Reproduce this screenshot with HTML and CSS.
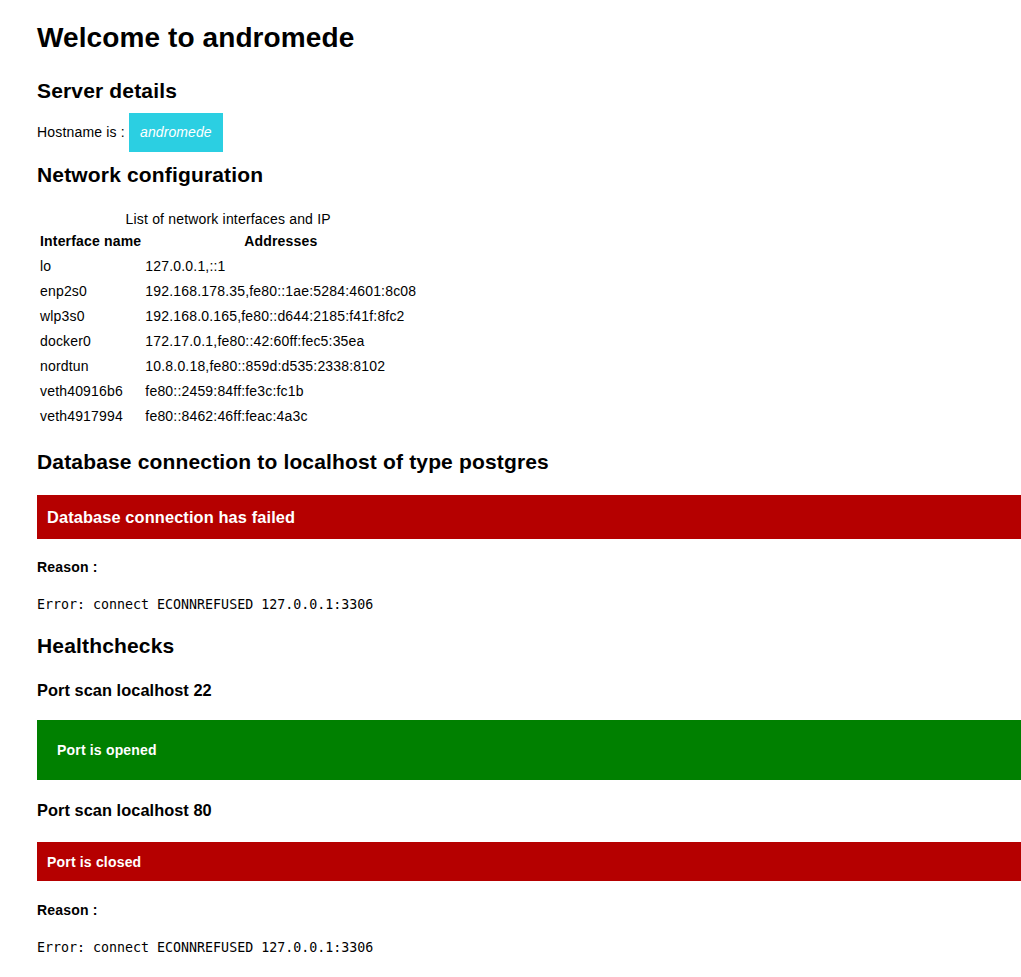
FILE: index.html
```html
<!DOCTYPE html>
<html lang="en">
<head>
<meta charset="utf-8">
<title>Welcome to andromede</title>
<link rel="stylesheet" href="styles.css">
</head>
<body>
<main class="page">
  <h1 class="title">Welcome to andromede</h1>

  <h2 class="section-title first">Server details</h2>
  <p class="hostname">Hostname is : <span class="host-badge">andromede</span></p>

  <h2 class="section-title">Network configuration</h2>
  <table class="net-table">
    <caption>List of network interfaces and IP</caption>
    <thead>
      <tr><th class="col-name">Interface name</th><th>Addresses</th></tr>
    </thead>
    <tbody>
      <tr><td>lo</td><td>127.0.0.1,::1</td></tr>
      <tr><td>enp2s0</td><td>192.168.178.35,fe80::1ae:5284:4601:8c08</td></tr>
      <tr><td>wlp3s0</td><td>192.168.0.165,fe80::d644:2185:f41f:8fc2</td></tr>
      <tr><td>docker0</td><td>172.17.0.1,fe80::42:60ff:fec5:35ea</td></tr>
      <tr><td>nordtun</td><td>10.8.0.18,fe80::859d:d535:2338:8102</td></tr>
      <tr><td>veth40916b6</td><td>fe80::2459:84ff:fe3c:fc1b</td></tr>
      <tr><td>veth4917994</td><td>fe80::8462:46ff:feac:4a3c</td></tr>
    </tbody>
  </table>

  <h2 class="section-title db-title">Database connection to localhost of type postgres</h2>
  <div class="alert alert-db"><h3 class="alert-heading">Database connection has failed</h3></div>
  <h4 class="reason">Reason :</h4>
  <pre class="error">Error: connect ECONNREFUSED 127.0.0.1:3306</pre>

  <h2 class="section-title health-title">Healthchecks</h2>
  <h3 class="check-title">Port scan localhost 22</h3>
  <div class="alert alert-ok">Port is opened</div>
  <h3 class="check-title">Port scan localhost 80</h3>
  <div class="alert alert-closed">Port is closed</div>
  <h4 class="reason">Reason :</h4>
  <pre class="error">Error: connect ECONNREFUSED 127.0.0.1:3306</pre>
</main>
</body>
</html>
```

FILE: styles.css
```css
html, body {
  margin: 0;
  padding: 0;
  background: #ffffff;
  overflow-x: hidden;
}

body {
  font-family: "Liberation Sans", Arial, sans-serif;
  font-size: 14px;
  line-height: 16px;
  letter-spacing: 0.18px;
  color: #000000;
}

.page {
  padding: 22px 0 20px 37px;
}

.title {
  margin: 0;
  font-size: 28px;
  line-height: 32px;
  font-weight: bold;
  letter-spacing: 0.1px;
}

.section-title {
  margin: 0;
  font-size: 21px;
  line-height: 24px;
  font-weight: bold;
  letter-spacing: 0.16px;
}

.section-title.first {
  margin-top: 25px;
}

.hostname {
  margin: 10px 0 11px;
  line-height: 16px;
}

.host-badge {
  display: inline-block;
  background: #2bcfe2;
  color: #ffffff;
  font-style: italic;
  padding: 11px 11px 12px;
  line-height: 16px;
  letter-spacing: 0.1px;
}

.net-table {
  margin-top: 24px;
  border-spacing: 2px;
}

.net-table caption {
  line-height: 16px;
  padding-bottom: 1px;
}

.net-table th,
.net-table td {
  padding: 3px 1px;
  line-height: 17px;
  text-align: left;
  white-space: nowrap;
}

.net-table th {
  font-weight: bold;
  text-align: center;
}

.net-table th.col-name {
  width: 101px;
  text-align: left;
}

.db-title {
  margin-top: 20px;
}

.alert {
  color: #ffffff;
  font-weight: bold;
}

.alert-heading {
  margin: 0;
  font-size: 16.38px;
  line-height: 19px;
  letter-spacing: 0.12px;
}

.alert-db {
  background: #b50000;
  margin-top: 21px;
  padding: 13px 10px 12px;
}

.alert-ok {
  background: #008000;
  margin-top: 20px;
  padding: 22px 20px;
  line-height: 16px;
}

.alert-closed {
  background: #b50000;
  margin-top: 22px;
  padding: 12px 10px 11px;
  line-height: 16px;
}

.reason {
  margin: 20px 0 0;
  font-size: 14px;
  line-height: 16px;
  font-weight: bold;
}

.alert-closed + .reason {
  margin-top: 21px;
}

.error {
  margin: 22px 0 0;
  font-family: "DejaVu Sans Mono", monospace;
  font-size: 13.3px;
  line-height: 16px;
  letter-spacing: 0;
}

.alert-closed + .reason + .error {
  margin-top: 22px;
}

.health-title {
  margin-top: 21px;
}

.check-title {
  margin: 23px 0 0;
  font-size: 16.38px;
  line-height: 19px;
  font-weight: bold;
  letter-spacing: 0.05px;
}

.alert-ok + .check-title {
  margin-top: 21px;
}
```
